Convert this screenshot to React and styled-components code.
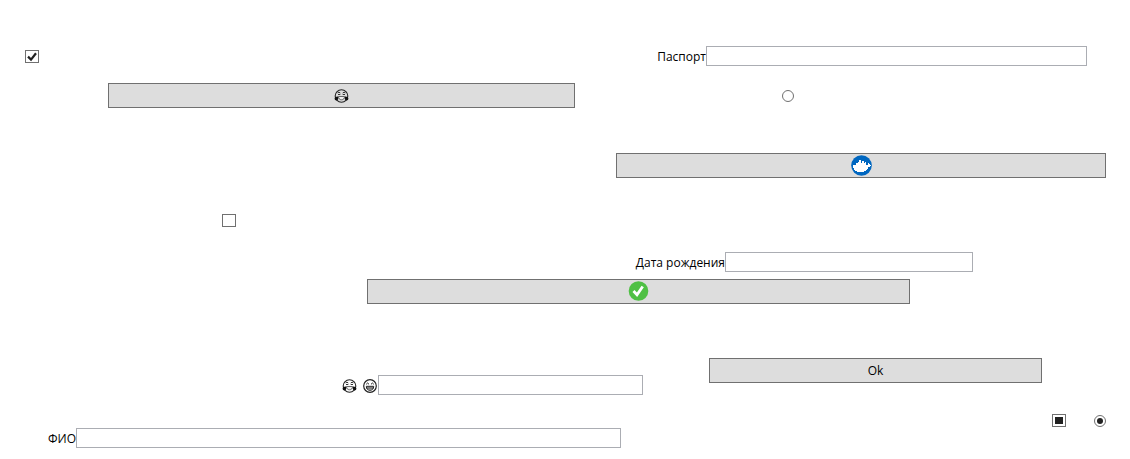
import React, { useEffect, useRef } from "react";
import styled, { createGlobalStyle } from "styled-components";

const GlobalStyle = createGlobalStyle`
  *, *::before, *::after { box-sizing: border-box; }
  body {
    margin: 0;
    background: #fff;
    color: #000;
    font: 12px/16px "Open Sans", "Noto Sans", sans-serif;
  }
`;

const Form = styled.form`
  display: flex;
  flex-direction: column;
  padding-top: 46px;
`;

const Row = styled.div`
  display: grid;
  grid-template-columns: ${(p) => p.$columns};
  align-items: center;
  margin-bottom: ${(p) => p.$after || 0}px;
`;

const Footer = styled.div`
  display: grid;
  grid-template-columns: 643fr 487fr;
  align-items: start;
`;

const FooterColumn = styled.div`
  padding-top: ${(p) => p.$top || 0}px;
`;

const Label = styled.label`
  display: flex;
  justify-content: flex-end;
  gap: 6px;
  padding-right: ${(p) => (p.$icons ? 1 : 0)}px;
  padding-top: 2px;
  white-space: nowrap;
`;

const TextBox = styled.input.attrs({ type: "text" })`
  width: 100%;
  min-width: 0;
  height: 20px;
  padding: 0 3px;
  border: 1px solid #abadb3;
  border-radius: 0;
  background: #fff;
  font: inherit;
  outline-offset: 0;
`;

const Button = styled.button.attrs({ type: "button" })`
  display: flex;
  align-items: center;
  justify-content: center;
  width: 100%;
  height: 25px;
  padding: 0;
  border: 1px solid #707070;
  border-radius: 0;
  background: #ddd;
  color: #000;
  font: inherit;

  &:hover {
    background: #d2d2d2;
  }
`;

const CheckWrap = styled.span`
  position: relative;
  display: block;
  width: 14px;
  height: 13px;
  justify-self: start;
`;

const CheckInput = styled.input.attrs({ type: "checkbox" })`
  appearance: none;
  display: block;
  width: 14px;
  height: 13px;
  margin: 0;
  border: 1px solid #707070;
  background: #fff;

  &:indeterminate {
    padding: 2px;
    background: #212121 content-box;
  }

  & + svg {
    position: absolute;
    inset: 0;
    visibility: hidden;
    pointer-events: none;
  }

  &:checked + svg {
    visibility: visible;
  }
`;

const Radio = styled.input.attrs({ type: "radio" })`
  appearance: none;
  display: block;
  width: 12px;
  height: 12px;
  margin: 0;
  border: 1px solid #707070;
  border-radius: 50%;
  background: #fff;

  &:checked {
    padding: 2px;
    background: #212121 content-box;
  }
`;

const Icon = styled.svg`
  display: block;
  flex: none;
`;

function CheckBox({ mixed = false, ...rest }) {
  const ref = useRef(null);
  useEffect(() => {
    ref.current.indeterminate = mixed;
  }, [mixed]);
  return (
    <CheckWrap>
      <CheckInput ref={ref} {...rest} />
      <svg width="14" height="13" viewBox="0 0 14 13" aria-hidden="true">
        <path d="M3 6.6 6 9.6 11 3.2" fill="none" stroke="#212121" strokeWidth="2.2" />
      </svg>
    </CheckWrap>
  );
}

function JoyFace() {
  return (
    <Icon width="15" height="14" viewBox="0 0 15 14" aria-hidden="true">
      <circle cx="7.5" cy="7" r="6.3" fill="none" stroke="#222" strokeWidth="1.1" />
      <path d="M3.600 3.800 5 3.200l1.300.8M8.700 4l1.300-.8 1.400.6M4 5.500h2.300M8.700 5.500H11" fill="none" stroke="#333" strokeWidth="1" />
      <path d="M4.500 7.500h6c0 2-1 3.300-3 3.300s-3-1.300-3-3.300Z" fill="#eee" stroke="#444" strokeWidth=".8" />
      <path d="M4 7.500C2.200 7.400.6 8.200.6 9.500c0 1.200.8 1.900 1.900 1.900C4 11.400 4.700 9.900 4 7.500ZM11 7.500c1.800-.1 3.400.7 3.400 2 0 1.200-.8 1.900-1.900 1.900-1.500 0-2.200-1.500-1.500-3.900Z" fill="#111" />
    </Icon>
  );
}

function GrinFace() {
  return (
    <Icon width="14" height="14" viewBox="0 0 14 14" aria-hidden="true">
      <circle cx="7" cy="7" r="6.300" fill="none" stroke="#222" strokeWidth="1.200" />
      <path d="M3.200 5.300 4.600 4 6 5.300M8 5.300 9.400 4l1.400 1.300" fill="none" stroke="#222" strokeWidth="1" />
      <path d="M3.300 7.300h7.400c0 2.500-1.500 4-3.700 4s-3.700-1.500-3.700-4Z" fill="#bbb" stroke="#222" strokeWidth="1" />
      <path d="M3.500 9h7" stroke="#222" strokeWidth=".8" />
    </Icon>
  );
}

function WhaleIcon() {
  return (
    <Icon width="21" height="21" viewBox="0 0 21 21" aria-hidden="true">
      <circle cx="10.500" cy="10.500" r="10.300" fill="#0067c0" />
      <path
        d="M2 10h3V8h2V7h1V5h2v3h1V6h2v2h1V7h1v3h2V8h1v1h1v1h1v1h-1v1h-2v2h-1v1h-1v1h-2v1H6v-1H4v-1H3v-2H2Z"
        fill="#fff"
      />
    </Icon>
  );
}

function DoneIcon() {
  return (
    <Icon width="21" height="21" viewBox="0 0 21 21" aria-hidden="true">
      <circle cx="10.500" cy="10" r="9.800" fill="#4fc044" />
      <path d="M5.500 10 9 13.700l5.700-8.200" fill="none" stroke="#fff" strokeWidth="2.800" />
    </Icon>
  );
}

export default function App() {
  return (
    <>
      <GlobalStyle />
      <Form>
        <Row $columns="25fr 14fr 667fr 381fr 43fr" $after={17}>
          <span />
          <CheckBox defaultChecked aria-label="Флажок 1" />
          <Label htmlFor="passport">Паспорт</Label>
          <TextBox id="passport" />
        </Row>
        <Row $columns="108fr 467fr 207fr 348fr" $after={45}>
          <span />
          <Button aria-label="Смех">
            <JoyFace />
          </Button>
          <span />
          <Radio name="first" aria-label="Вариант 1" />
        </Row>
        <Row $columns="616fr 490fr 24fr" $after={36}>
          <span />
          <Button aria-label="Docker">
            <WhaleIcon />
          </Button>
        </Row>
        <Row $columns="222fr 908fr" $after={25}>
          <span />
          <CheckBox aria-label="Флажок 2" />
        </Row>
        <Row $columns="725fr 248fr 157fr" $after={7}>
          <Label htmlFor="birth">Дата рождения</Label>
          <TextBox id="birth" />
        </Row>
        <Row $columns="367fr 543fr 220fr" $after={54}>
          <span />
          <Button aria-label="Готово">
            <DoneIcon />
          </Button>
        </Row>
        <Footer>
          <FooterColumn $top={17}>
            <Row $columns="378fr 265fr" $after={33}>
              <Label htmlFor="mood" aria-label="Настроение" $icons>
                <JoyFace />
                <GrinFace />
              </Label>
              <TextBox id="mood" />
            </Row>
            <Row $columns="76fr 545fr 22fr">
              <Label htmlFor="name">ФИО</Label>
              <TextBox id="name" />
            </Row>
          </FooterColumn>
          <FooterColumn>
            <Row $columns="66fr 333fr 88fr" $after={31}>
              <span />
              <Button>Ok</Button>
            </Row>
            <Row $columns="409fr 42fr 36fr">
              <span />
              <CheckBox mixed aria-label="Флажок 3" />
              <Radio name="second" defaultChecked aria-label="Вариант 2" />
            </Row>
          </FooterColumn>
        </Footer>
      </Form>
    </>
  );
}
